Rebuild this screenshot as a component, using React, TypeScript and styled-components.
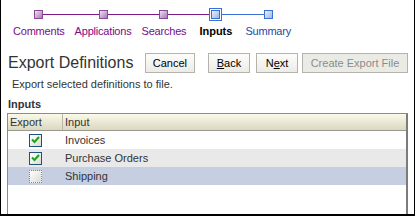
import styled, { createGlobalStyle } from "styled-components";

const GlobalStyle = createGlobalStyle`
  html, body {
    margin: 0;
    padding: 0;
    background: #ffffff;
  }
  body {
    font-family: "Liberation Sans", Arial, sans-serif;
    font-size: 11px;
    color: #333333;
  }
`;

type StepState = "visited" | "current" | "future";

const steps: { label: string; state: StepState }[] = [
  { label: "Comments", state: "visited" },
  { label: "Applications", state: "visited" },
  { label: "Searches", state: "visited" },
  { label: "Inputs", state: "current" },
  { label: "Summary", state: "future" },
];

const rows = [
  { name: "Invoices", checked: true, tone: "plain" },
  { name: "Purchase Orders", checked: true, tone: "band" },
  { name: "Shipping", checked: false, tone: "selected" },
] as const;

// line colour leading into a step: purple up to the current one, blue after
const lineInto = (s: StepState) => (s === "future" ? "#3b6fd4" : "#7a1a86");

const Check = () => (
  <svg width="9" height="8" viewBox="0 0 9 8">
    <path d="M1 3.5 L3.5 6 L8 1" stroke="#21a121" strokeWidth="2" fill="none" />
  </svg>
);

export default function App() {
  return (
    <>
      <GlobalStyle />
      <Frame>
        <Train>
          {steps.map((s, i) => (
            <Step key={s.label}>
              <Track>
                <HalfLine $hidden={i === 0} $color={lineInto(s.state)} />
                {s.state === "current" ? (
                  <CurrentMark>
                    <span />
                  </CurrentMark>
                ) : (
                  <Mark $state={s.state} />
                )}
                <HalfLine
                  $hidden={i === steps.length - 1}
                  $color={lineInto(steps[Math.min(i + 1, steps.length - 1)].state)}
                />
              </Track>
              <StepLabel $state={s.state}>{s.label}</StepLabel>
            </Step>
          ))}
        </Train>

        <HeaderRow>
          <Title>Export Definitions</Title>
          <Buttons>
            <Button $gapAfter={13}>Cancel</Button>
            <Button $gapAfter={6}>
              <u>B</u>ack
            </Button>
            <Button $gapAfter={4}>
              N<u>e</u>xt
            </Button>
            <Button disabled>Create Export File</Button>
          </Buttons>
        </HeaderRow>

        <Description>Export selected definitions to file.</Description>
        <SectionLabel>Inputs</SectionLabel>

        <Table>
          <HeadRow>
            <HeadCell $w={55}>Export</HeadCell>
            <HeadCell>Input</HeadCell>
          </HeadRow>
          {rows.map((r) => (
            <Row key={r.name} $tone={r.tone}>
              <CheckCell>
                <Box $focused={r.tone === "selected"}>{r.checked && <Check />}</Box>
              </CheckCell>
              <NameCell>{r.name}</NameCell>
            </Row>
          ))}
        </Table>
      </Frame>
    </>
  );
}

const Frame = styled.div`
  box-sizing: border-box;
  width: 415px;
  height: 216px;
  border-left: 1px solid #000;
  border-right: 1px solid #000;
  border-bottom: 2px solid #000;
  padding: 8px 6px 0 6px;
  overflow: hidden;
`;

const Train = styled.div`
  display: flex;
  padding-left: 1px;
`;

const Step = styled.div`
  display: flex;
  flex-direction: column;
  align-items: stretch;
`;

const Track = styled.div`
  display: flex;
  align-items: center;
  height: 13px;
`;

const HalfLine = styled.div<{ $hidden?: boolean; $color: string }>`
  flex: 1;
  height: 1px;
  background: ${(p) => (p.$hidden ? "transparent" : p.$color)};
`;

const Mark = styled.div<{ $state: StepState }>`
  box-sizing: border-box;
  width: 9px;
  height: 9px;
  border: 1px solid ${(p) => (p.$state === "future" ? "#3b6fd4" : "#8a4a96")};
  background: ${(p) =>
    p.$state === "future"
      ? "linear-gradient(135deg, #e6f0fc, #9cb8e8)"
      : "linear-gradient(135deg, #eee2f0, #a57ab5)"};
`;

const CurrentMark = styled.div`
  box-sizing: border-box;
  width: 13px;
  height: 13px;
  border: 1px solid #3b6fd4;
  padding: 1px;
  background: #fff;

  span {
    display: block;
    box-sizing: border-box;
    width: 9px;
    height: 9px;
    border: 1px solid #3b6fd4;
    background: linear-gradient(135deg, #e6f0fc, #9cb8e8);
  }
`;

const StepLabel = styled.div<{ $state: StepState }>`
  padding: 4px ${(p) => (p.$state === "current" ? 8 : 5)}px 0;
  line-height: 13px;
  font-size: 11px;
  letter-spacing: ${(p) => (p.$state === "current" ? 0 : -0.2)}px;
  white-space: nowrap;
  font-weight: ${(p) => (p.$state === "current" ? "bold" : "normal")};
  color: ${(p) =>
    p.$state === "current" ? "#000" : p.$state === "future" ? "#2448a8" : "#7a0a86"};
`;

const HeaderRow = styled.div`
  display: flex;
  align-items: center;
  justify-content: space-between;
  margin-top: 15px;
  height: 20px;
`;

const Title = styled.h1`
  margin: 0;
  padding-left: 1px;
  font-size: 16px;
  font-weight: normal;
  white-space: nowrap;
  color: #333;
`;

const Buttons = styled.div`
  display: flex;
`;

const Button = styled.button<{ $gapAfter?: number }>`
  box-sizing: border-box;
  height: 20px;
  min-width: 42px;
  margin-right: ${(p) => p.$gapAfter ?? 0}px;
  padding: 0 7px;
  font-family: inherit;
  font-size: 11px;
  white-space: nowrap;
  color: #000;
  border: 1px solid #b4b4ac;
  border-radius: 0;
  background: linear-gradient(#fdfdfb, #ecebe6);

  &:disabled {
    min-width: 106px;
    color: #8c8c8c;
    background: #ebebe6;
  }
`;

const Description = styled.div`
  margin-top: 4px;
  padding-left: 5px;
  line-height: 14px;
`;

const SectionLabel = styled.div`
  margin-top: 6px;
  padding-left: 1px;
  font-weight: bold;
  line-height: 14px;
`;

const Table = styled.div`
  margin-top: 2px;
  height: 100px;
  border-top: 1px solid #8c8c88;
  border-left: 1px solid #8c8c88;
  border-right: 2px solid #7c7c78;
`;

const HeadRow = styled.div`
  display: flex;
  height: 16px;
  border-bottom: 1px solid #9c9a8c;
  background: linear-gradient(#fbf9e8, #dad7c2);
`;

const HeadCell = styled.div<{ $w?: number }>`
  box-sizing: border-box;
  ${(p) => (p.$w ? `width: ${p.$w}px; border-right: 1px solid #bcb8a4;` : "flex: 1;")}
  padding-left: 2px;
  line-height: 16px;
  color: #333;
`;

const Row = styled.div<{ $tone: "plain" | "band" | "selected" }>`
  display: flex;
  align-items: center;
  height: 18px;
  background: ${(p) =>
    p.$tone === "band" ? "#e9e9e9" : p.$tone === "selected" ? "#c5cfe1" : "#fff"};
`;

const CheckCell = styled.div`
  display: flex;
  justify-content: center;
  width: 55px;
`;

const NameCell = styled.div`
  padding-left: 2px;
  color: #333;
`;

const Box = styled.div<{ $focused?: boolean }>`
  box-sizing: border-box;
  display: flex;
  align-items: center;
  justify-content: center;
  width: 13px;
  height: 13px;
  border: 1px ${(p) => (p.$focused ? "dotted #c07a30" : "solid #1c5180")};
  background: linear-gradient(135deg, #ffffff, #dcdcd4);
`;
